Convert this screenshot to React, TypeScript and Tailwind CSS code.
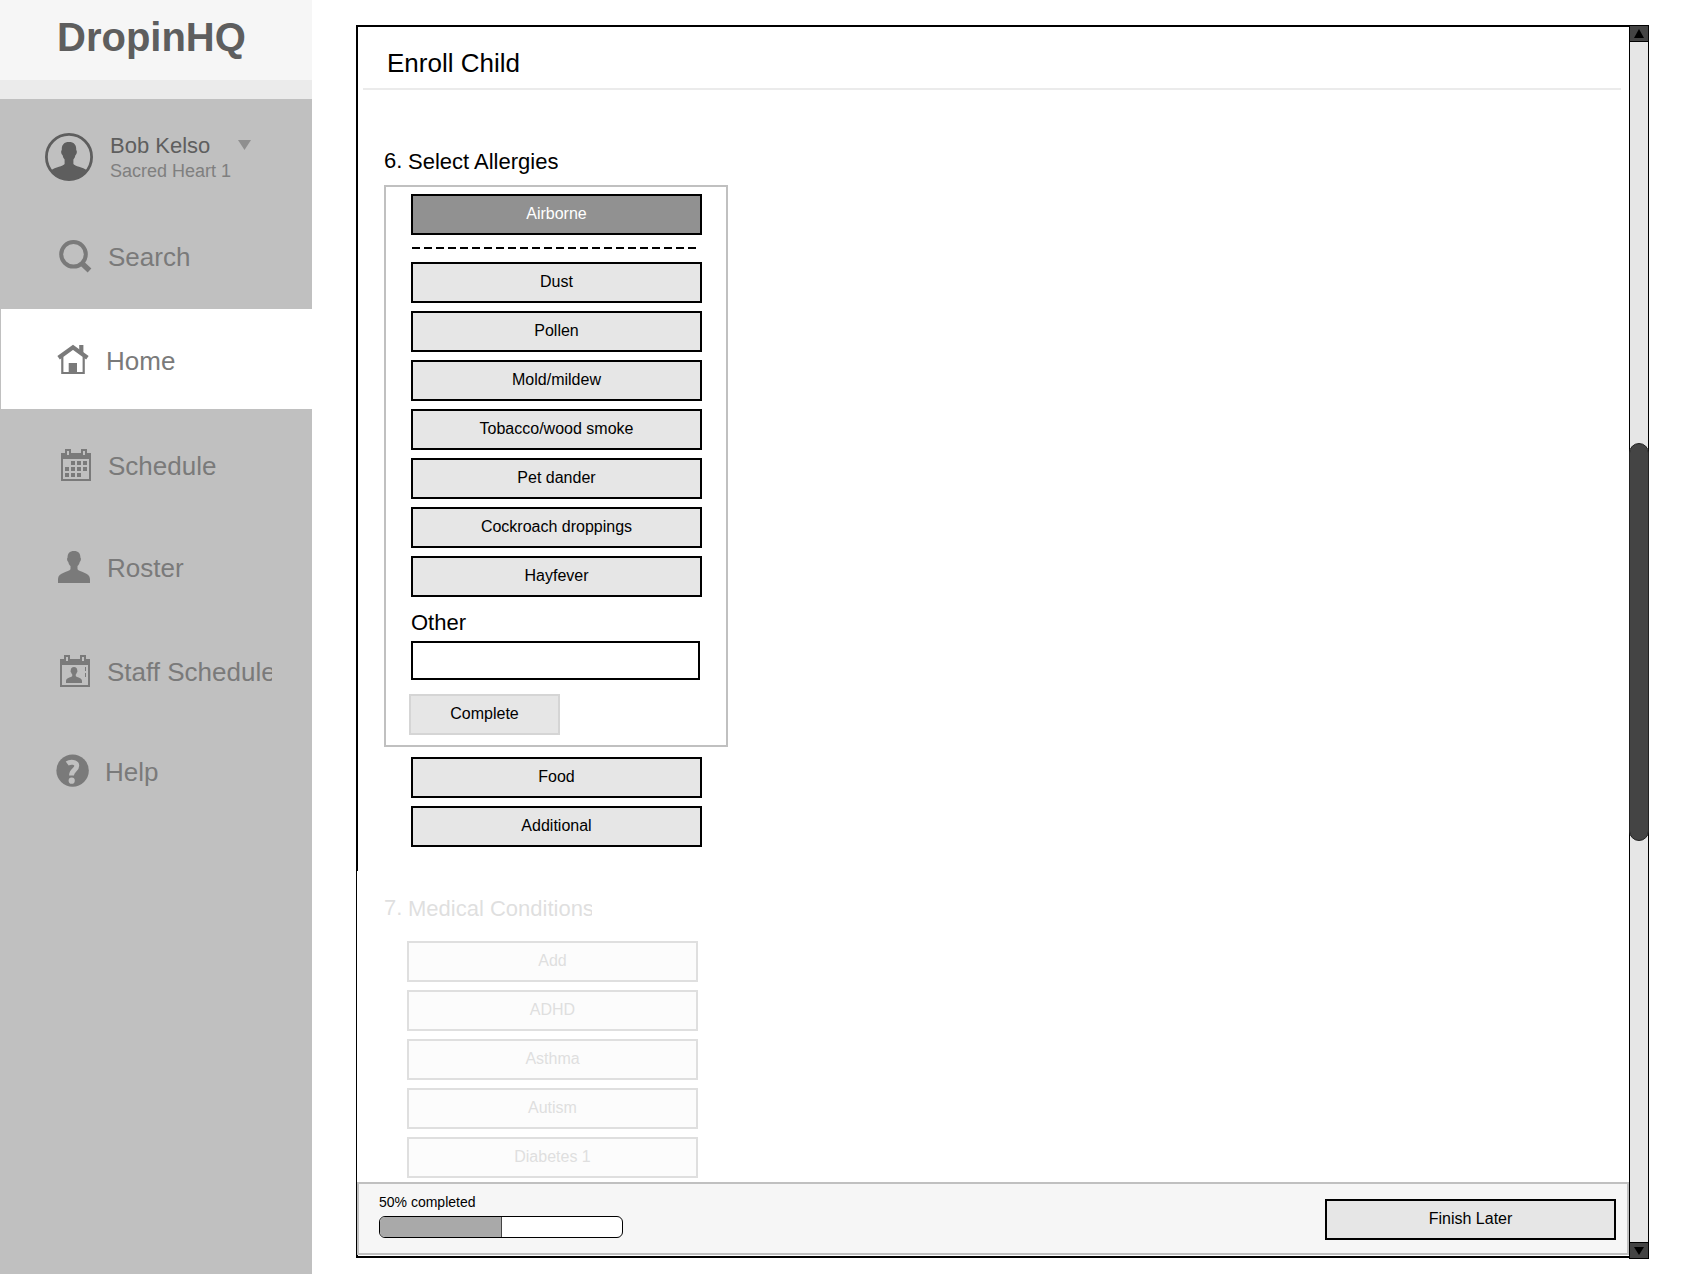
import { ReactNode } from 'react';
import clsx from 'clsx';

const PERSON_PATH =
  'M17 1c-4.4 0-6.6 2.6-6.4 6.6-.9.6-.7 3.6.7 4.4.3 1.600 1 2.900 2.200 4v3.200c-1.500 2.800-12.500 3-12.500 9.800v4h32v-4c0-6.800-11-7-12.500-9.800V16c1.200-1.100 1.900-2.400 2.200-4 1.400-.8 1.600-3.800.7-4.400C23.600 3.600 21.400 1 17 1z';

function Icon({ children }: { children: ReactNode }) {
  return (
    <svg width="34" height="34" viewBox="0 0 34 34" fill="#7a7a7a" className="shrink-0">
      {children}
    </svg>
  );
}

function SearchIcon() {
  return (
    <Icon>
      <circle cx="15.500" cy="15.300" r="12.300" fill="none" stroke="#7a7a7a" strokeWidth="4" />
      <path d="M23.500 24l8 7.500" stroke="#7a7a7a" strokeWidth="5.400" />
    </Icon>
  );
}

function HomeIcon() {
  return (
    <Icon>
      <path d="M23.200 2h4.200v9.500l-4.200-3.500z" />
      <path d="M2.600 14.700L17 4.300l14.400 10.400" fill="none" stroke="#7a7a7a" strokeWidth="4.200" />
      <path d="M6.300 14v16h21.400V14" fill="none" stroke="#7a7a7a" strokeWidth="2.200" />
      <path d="M12.700 20H21v10h-8.300z" />
    </Icon>
  );
}

function CalendarFrame() {
  return (
    <path
      fillRule="evenodd"
      d="M3 5h4V1h6v4h10V1h6v4h4v28H3zM9 3v4h2V3zM25 3v4h2V3zM5 11v20h26V11z"
    />
  );
}

function ScheduleIcon() {
  return (
    <Icon>
      <CalendarFrame />
      <path d="M13 13h4v4h-4zM19 13h4v4h-4zM25 13h4v4h-4zM7 19h4v4H7zM13 19h4v4h-4zM19 19h4v4h-4zM25 19h4v4h-4zM7 25h4v4H7zM13 25h4v4h-4zM19 25h4v4h-4z" />
    </Icon>
  );
}

function RosterIcon() {
  return (
    <Icon>
      <path d={PERSON_PATH} />
    </Icon>
  );
}

function StaffIcon() {
  return (
    <Icon>
      <CalendarFrame />
      <path d={PERSON_PATH} transform="translate(8.500 12.500) scale(.5)" />
      <path d="M28 13h1v4h-1zM28 19h1v4h-1z" />
    </Icon>
  );
}

function HelpIcon() {
  return (
    <Icon>
      <circle cx="17.600" cy="16.600" r="16.200" />
      <path
        d="M12.200 9.600c3-2.200 9.600-2 9.600 2.200 0 4.200-5.300 4-5.300 9.700"
        fill="none"
        stroke="#c0c0c0"
        strokeWidth="4.900"
      />
      <circle cx="16.700" cy="26.700" r="3.100" fill="#c0c0c0" />
    </Icon>
  );
}

interface NavItem {
  label: string;
  icon: ReactNode;
  className: string;
  active?: boolean;
}

const NAV_ITEMS: NavItem[] = [
  { label: 'Search', icon: <SearchIcon />, className: 'pl-[58px]' },
  { label: 'Home', icon: <HomeIcon />, className: 'mt-[3px] pt-[2px] pl-[55px]', active: true },
  { label: 'Schedule', icon: <ScheduleIcon />, className: 'mt-[6px] pl-[58px]' },
  { label: 'Roster', icon: <RosterIcon />, className: 'mt-[2px] pl-[57px]' },
  { label: 'Staff Schedule', icon: <StaffIcon />, className: 'mt-[4px] pl-[57px]' },
  { label: 'Help', icon: <HelpIcon />, className: 'pl-[55px]' },
];

const AIRBORNE = [
  'Dust',
  'Pollen',
  'Mold/mildew',
  'Tobacco/wood smoke',
  'Pet dander',
  'Cockroach droppings',
  'Hayfever',
];

const CONDITIONS = ['Add', 'ADHD', 'Asthma', 'Autism', 'Diabetes 1'];

type Variant = 'default' | 'selected' | 'muted' | 'disabled';

const VARIANTS: Record<Variant, string> = {
  default: 'border-black bg-[#e6e6e6] text-black',
  selected: 'border-black bg-[#919191] text-white',
  muted: 'border-[#d5d5d5] bg-[#e6e6e6] text-black',
  disabled: 'border-[#dfdfdf] bg-[#fcfcfc] text-[#dfdfdf]',
};

function Button({
  children,
  variant = 'default',
  className = 'w-[291px]',
}: {
  children: ReactNode;
  variant?: Variant;
  className?: string;
}) {
  return (
    <button
      className={clsx(
        'block h-[41px] shrink-0 border-2 pb-px text-center text-[16px] leading-[18px]',
        VARIANTS[variant],
        className,
      )}
    >
      {children}
    </button>
  );
}

function Sidebar() {
  return (
    <aside className="w-[312px] shrink-0 bg-[#c0c0c0]">
      <div className="h-[80px] bg-[#f6f6f6] pt-[14px] pl-[57px] text-[40px] leading-[46px] font-bold text-[#5e5e5e]">
        DropinHQ
      </div>
      <div className="h-[19px] bg-[#ebebeb]" />

      {/* Current user */}
      <div className="flex h-[107px] pt-[34px] pl-[45px]">
        <svg width="48" height="48" viewBox="0 0 48 48" fill="#5e5e5e">
          <clipPath id="avatar">
            <circle cx="24" cy="24" r="23" />
          </clipPath>
          <circle cx="24" cy="24" r="22.600" fill="none" stroke="#5e5e5e" strokeWidth="2.800" />
          <g clipPath="url(#avatar)">
            <path d="M24 9c-5.200 0-7.500 3-7.200 7.900-1.100.7-.8 4.400.8 5.300.3 1.700 1 3.200 2 4.400v4.400C18 33.500 11 33.500 5 38v10h38V38c-6-4.500-13-4.500-14.600-7v-4.400c1-1.200 1.700-2.700 2-4.400 1.600-.9 1.900-4.600.8-5.300C31.500 12 29.200 9 24 9z" />
          </g>
        </svg>
        <div className="ml-[17px] w-[128px]">
          <div className="text-[22px] leading-[25px] text-[#5e5e5e]">Bob Kelso</div>
          <div className="mt-[2px] text-[18px] leading-[22px] text-[#7f7f7f]">Sacred Heart 1</div>
        </div>
        <svg width="13" height="10" viewBox="0 0 13 10" fill="#8f8f8f" className="mt-[7px]">
          <path d="M0 0h13L6.500 10z" />
        </svg>
      </div>

      <nav>
        {NAV_ITEMS.map((item) => (
          <a
            key={item.label}
            className={clsx(
              'flex h-[100px] items-center gap-[16px]',
              item.className,
              item.active && 'ml-px bg-white',
            )}
          >
            {item.icon}
            <span className="max-w-[165px] overflow-hidden pt-[2px] text-[26px] leading-[30px] whitespace-nowrap text-[#7a7a7a]">
              {item.label}
            </span>
          </a>
        ))}
      </nav>
    </aside>
  );
}

function SectionTitle({ number, children }: { number: string; children: ReactNode }) {
  return (
    <h2 className="flex text-[22px] leading-[25px]">
      <span className="w-[24px] shrink-0">{number}</span>
      <span className="mt-px max-w-[184px] overflow-hidden whitespace-nowrap">{children}</span>
    </h2>
  );
}

function Scrollbar() {
  return (
    <div className="flex h-[1234px] w-[20px] shrink-0 flex-col border border-black bg-[#e6e6e6]">
      <div className="flex h-[16px] justify-center border-b border-black bg-[#444] pt-[3px]">
        <svg width="10" height="9" viewBox="0 0 10 9">
          <path d="M5 0l5 9H0z" />
        </svg>
      </div>
      <div className="-mx-px mt-[401px] h-[398px] rounded-full border border-[#222] bg-[#444]" />
      <div className="mt-auto flex h-[16px] justify-center border-t border-black bg-[#444] pt-[4px]">
        <svg width="10" height="8" viewBox="0 0 10 8">
          <path d="M0 0h10L5 8z" />
        </svg>
      </div>
    </div>
  );
}

export default function App() {
  const progress = 50;

  return (
    <div className="flex h-[1274px] w-[1683px] overflow-hidden bg-white font-['Liberation_Sans',Arial,sans-serif] text-black">
      <Sidebar />

      <main className="mt-[25px] ml-[44px] flex">
        <div className="flex h-[1233px] w-[1273px] flex-col border-y-2 border-l-2 border-black bg-white">
          <header className="mr-[8px] ml-[5px] h-[63px] border-b-2 border-[#ebebeb] pt-[21px] pl-[24px]">
            <h1 className="text-[26px] leading-[30px]">Enroll Child</h1>
          </header>

          {/* Allergies */}
          <section className="h-[781px] pt-[58px] pl-[26px]">
            <SectionTitle number="6.">Select Allergies</SectionTitle>
            <div className="mt-[11px] h-[562px] w-[344px] border-2 border-[#c0c0c0] pt-[7px] pl-[25px]">
              <Button variant="selected">Airborne</Button>
              <div className="mt-[12px] ml-px h-[2px] w-[284px] bg-[repeating-linear-gradient(90deg,#000_0_8px,transparent_8px_12px)]" />
              <div className="mt-[13px] flex flex-col gap-2">
                {AIRBORNE.map((name) => (
                  <Button key={name}>{name}</Button>
                ))}
              </div>
              <label className="mt-[13px] block text-[22px] leading-[25px]">
                Other
                <input className="mt-[6px] block h-[39px] w-[289px] border-2 border-black bg-white px-2 text-[16px]" />
              </label>
              <Button variant="muted" className="mt-[14px] -ml-[2px] w-[151px]">
                Complete
              </Button>
            </div>
            <div className="mt-[10px] ml-[27px] flex flex-col gap-2">
              <Button>Food</Button>
              <Button>Additional</Button>
            </div>
          </section>

          {/* Medical conditions, not reachable until allergies are done */}
          <section className="-ml-px h-[311px] bg-white pt-[24px] pl-[27px] text-[#dfdfdf]">
            <SectionTitle number="7.">Medical Conditions</SectionTitle>
            <div className="mt-[20px] ml-[23px] flex flex-col gap-2">
              {CONDITIONS.map((name) => (
                <Button key={name} variant="disabled">
                  {name}
                </Button>
              ))}
            </div>
          </section>

          <footer className="-ml-px flex h-[73px] justify-between border-2 border-[#c0c0c0] bg-[#f6f6f6] pt-[15px] pr-[11px] pl-[20px]">
            <div className="-mt-[5px]">
              <div className="text-[14px] leading-[16px]">{progress}% completed</div>
              <div className="mt-[6px] h-[22px] w-[244px] overflow-hidden rounded-[6px] border border-black bg-white">
                <div
                  className="box-content h-full border-r border-[#444] bg-[#a9a9a9]"
                  style={{ width: `${progress}%` }}
                />
              </div>
            </div>
            <Button>Finish Later</Button>
          </footer>
        </div>
        <Scrollbar />
      </main>
    </div>
  );
}
